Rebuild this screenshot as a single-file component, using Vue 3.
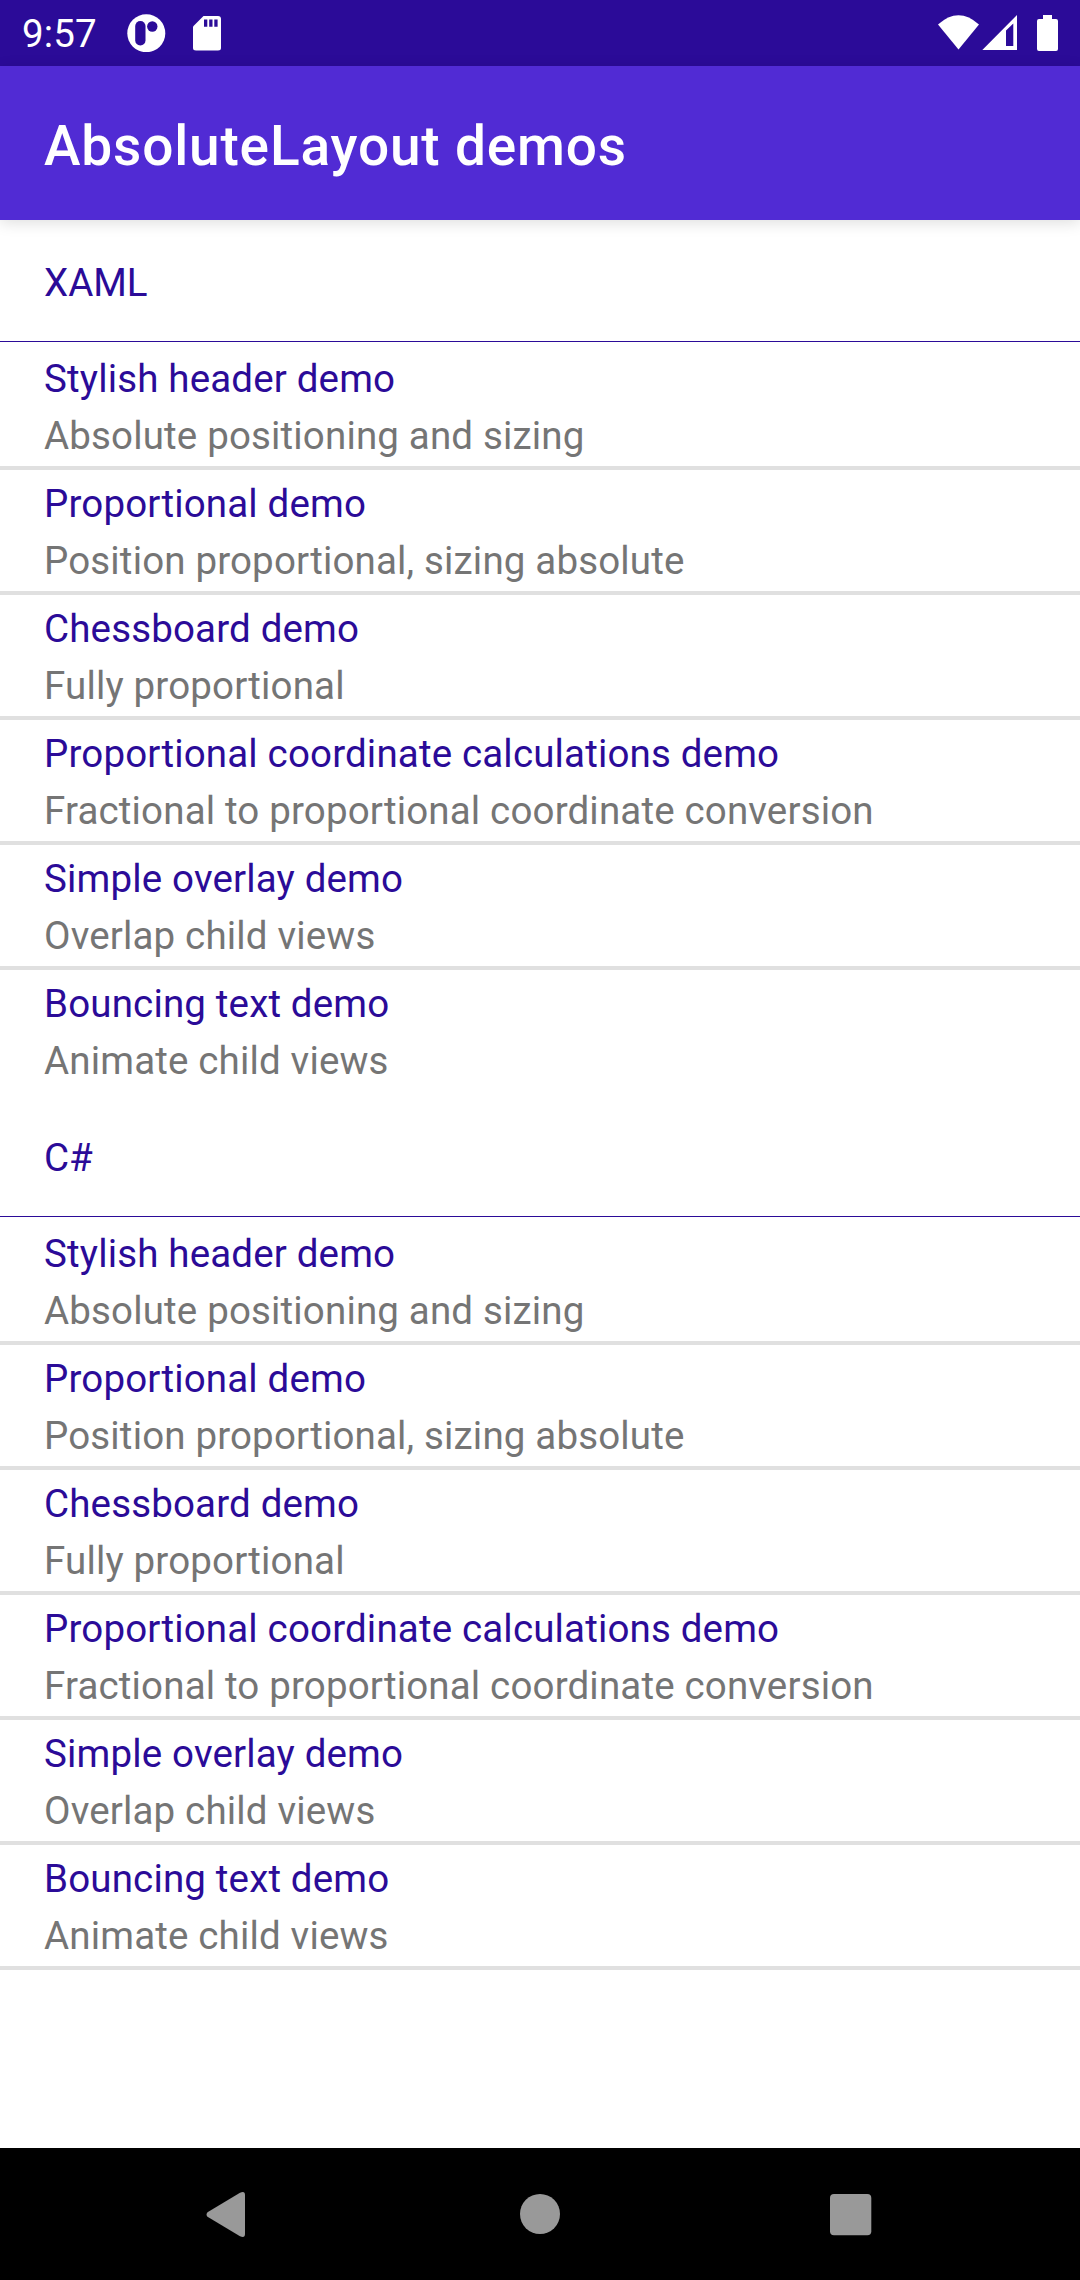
<script setup>
const demos = [
  ['Stylish header demo', 'Absolute positioning and sizing'],
  ['Proportional demo', 'Position proportional, sizing absolute'],
  ['Chessboard demo', 'Fully proportional'],
  ['Proportional coordinate calculations demo', 'Fractional to proportional coordinate conversion'],
  ['Simple overlay demo', 'Overlap child views'],
  ['Bouncing text demo', 'Animate child views'],
]
const sections = ['XAML', 'C#']
</script>

<template>
  <div class="screen">
    <header class="status">
      <span class="time">9:57</span>
      <svg class="app-icon" width="39" height="38" viewBox="0 0 39 38">
        <circle cx="19.3" cy="19.2" r="19" fill="#fff" />
        <rect x="8.2" y="7" width="10.3" height="24.5" rx="5.1" fill="#2b0b98" />
        <circle cx="25.3" cy="12.5" r="5.2" fill="#2b0b98" />
      </svg>
      <svg class="sd" width="28" height="35" viewBox="0 0 28 35">
        <path d="M10.5 0H25q3 0 3 3v29q0 2.500-3 2.500H3q-3 0-3-2.500V10.500z" fill="#fff" />
        <path d="M11 3.500h3.300v7.300H11zM16.200 3.500h3.300v7.300h-3.300zM21.300 3.500h3.300v7.300h-3.300z" fill="#2b0b98" />
      </svg>
      <svg class="system" width="120" height="37" viewBox="0 0 120 37" fill="#fff">
        <path d="M0 9.500Q20.500-9 41 9.500L20.500 34.500z" />
        <path fill-rule="evenodd" d="M44.300 35L79 0V35zM68 15.500V31H75.300V8.500z" />
        <path d="M105 0h9v4h4q2 0 2 2v28q0 2-2 2h-17q-2 0-2-2V6q0-2 2-2h4z" />
      </svg>
    </header>
    <div class="toolbar"><h1>AbsoluteLayout demos</h1></div>
    <main>
      <section v-for="s in sections" :key="s">
        <h2>{{ s }}</h2>
        <ul>
          <li v-for="[title, detail] in demos" :key="title">
            <div class="title">{{ title }}</div>
            <div class="detail">{{ detail }}</div>
          </li>
        </ul>
      </section>
    </main>
    <nav>
      <svg width="1080" height="132" viewBox="0 0 1080 132" fill="#999">
        <path d="M207.500 64.200L240 44.700Q245 42.500 245 47V86Q245 90.500 240 88.300L207.500 68.700Q205.500 66.500 207.500 64.200z" />
        <circle cx="540" cy="66" r="20" />
        <rect x="830" y="46" width="41.300" height="41.300" rx="4" />
      </svg>
    </nav>
  </div>
</template>

<style>
body { margin: 0; }
</style>

<style scoped>
.screen { width: 1080px; height: 2280px; display: flex; flex-direction: column; background: #fff; font-family: Roboto, sans-serif; overflow: hidden; }
.status { height: 66px; flex: none; display: flex; background: #2b0b98; color: #fff; }
.time { width: 105px; padding-left: 22px; font-size: 38.5px; line-height: 68px; letter-spacing: 0.16px; }
.app-icon { margin-top: 14px; }
.sd { margin: 16px 0 0 27px; }
.system { margin: 15px 22px 0 auto; }
.toolbar { height: 154px; flex: none; background: #512bd4; box-shadow: 0 3px 14px rgba(0, 0, 0, 0.13); color: #fff; }
h1 { margin: 0; padding-left: 44px; font-size: 55px; line-height: 160px; font-weight: 500; letter-spacing: 0.83px; }
main { flex: 1; }
h2 { margin: 0; height: 121px; padding-left: 44px; border-bottom: 1px solid #2b0b98; font-size: 38.5px; line-height: 125px; font-weight: 400; color: #2b0b98; }
ul { list-style: none; margin: 0; padding: 0; }
li { padding: 5px 44px 2px; border-bottom: 4px solid #e0e0e0; font-size: 38.5px; line-height: 57px; letter-spacing: 0.16px; }
li:first-child { padding-top: 8px; }
section:first-child li:last-child { border-bottom-color: transparent; }
.title { color: #2b0b98; }
.detail { color: #757575; }
nav { height: 132px; flex: none; background: #000; }
nav svg { display: block; }
</style>
